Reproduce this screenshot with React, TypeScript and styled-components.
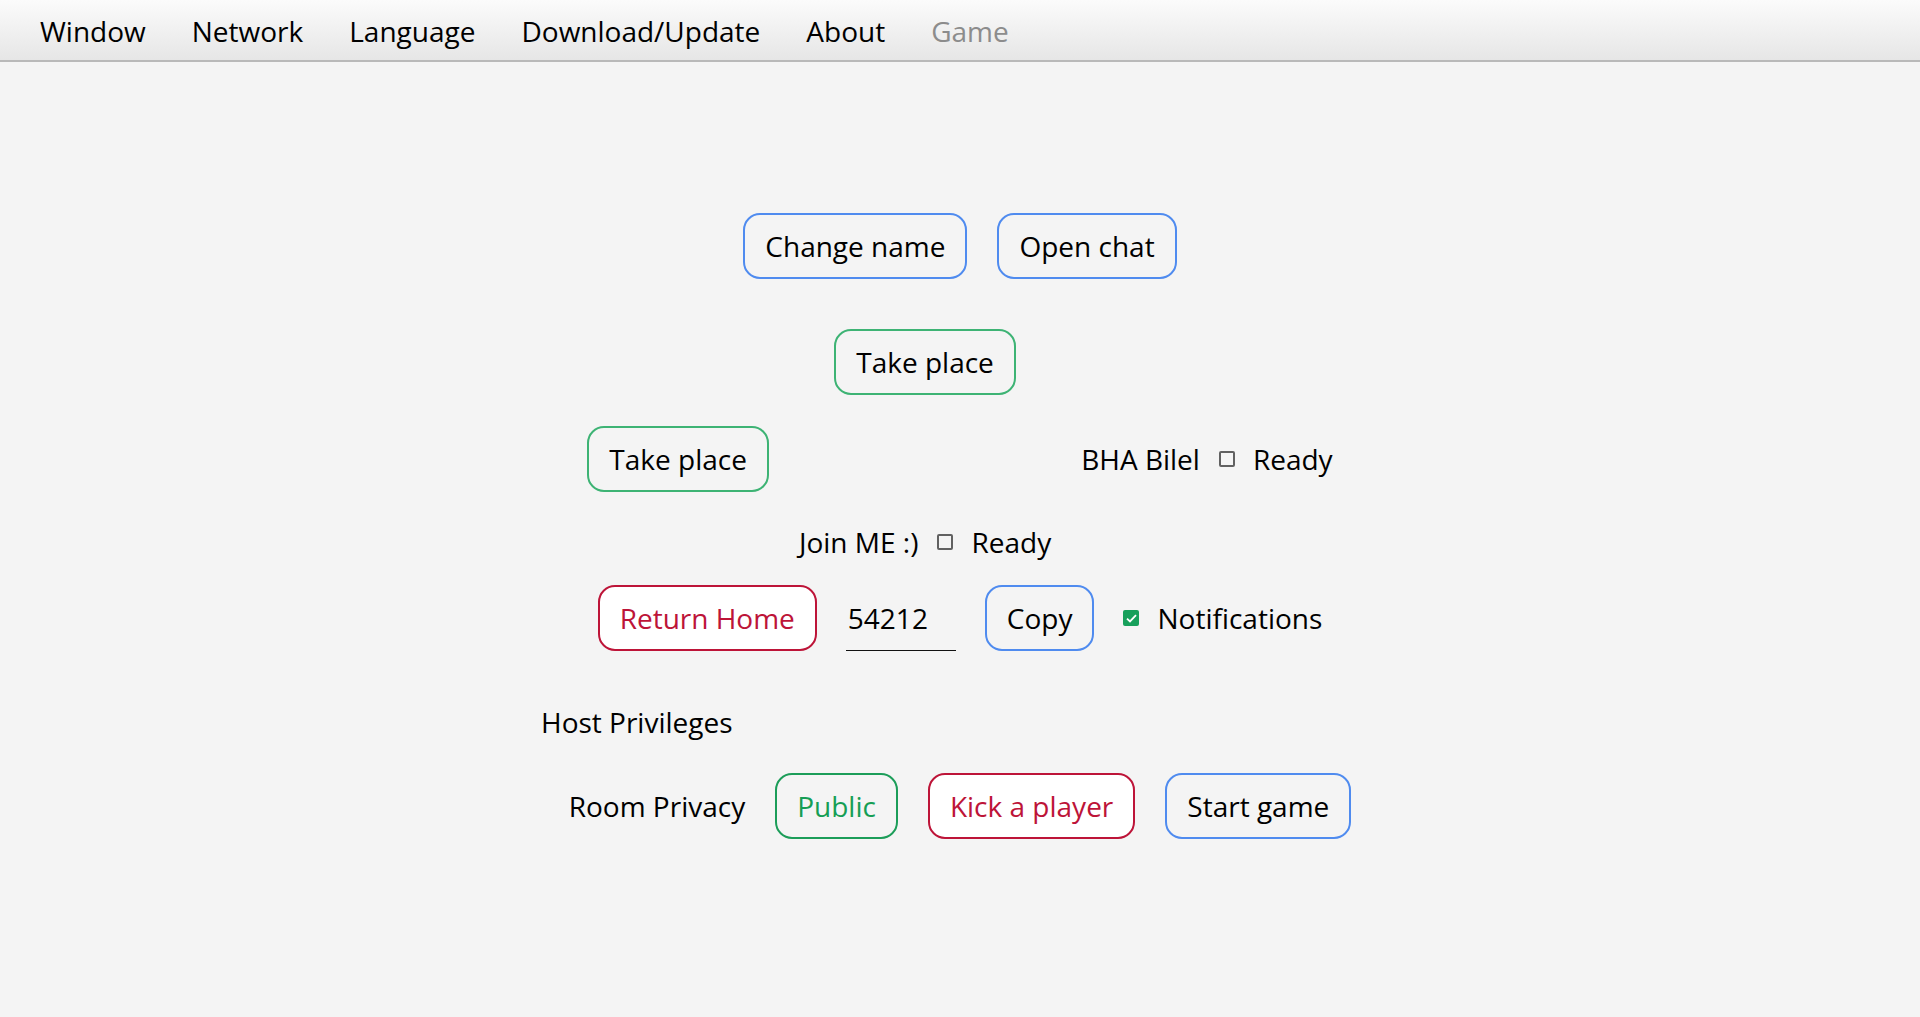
import * as React from "react";
import styled, { createGlobalStyle, css } from "styled-components";

const GlobalStyle = createGlobalStyle`
  html, body {
    margin: 0;
    padding: 0;
    background: #f4f4f4;
    font-family: "Open Sans", "Noto Sans", sans-serif;
    color: #000;
  }
  * { box-sizing: border-box; }
`;

const tones = {
  blue: { border: "#4f8bef", text: "#000", bg: "#f4f4f4" },
  green: { border: "#3db374", text: "#000", bg: "#f4f4f4" },
  public: { border: "#1c9d59", text: "#169e55", bg: "#f4f4f4" },
  red: { border: "#bd1438", text: "#bd1438", bg: "#ffffff" },
};

type Tone = keyof typeof tones;

const Page = styled.div`
  min-height: 1017px;
  display: flex;
  flex-direction: column;
`;

const MenuBar = styled.nav`
  height: 62px;
  display: flex;
  align-items: center;
  padding-left: 17px;
  background: linear-gradient(#fbfbfb, #e6e6e6);
  border-bottom: 2px solid #b9b9b9;
`;

const MenuItem = styled.span<{ $disabled?: boolean }>`
  font-size: 28px;
  line-height: 38px;
  padding: 1px 23px 0;
  color: ${({ $disabled }) => ($disabled ? "#8c8c8c" : "#000")};
`;

const Content = styled.main`
  display: flex;
  flex-direction: column;
  align-items: center;
  padding-top: 151px;
`;

const Row = styled.div<{ $gap?: number; $mt?: number }>`
  display: flex;
  align-items: center;
  gap: ${({ $gap }) => $gap ?? 30}px;
  margin-top: ${({ $mt }) => $mt ?? 0}px;
`;

const Button = styled.button<{ $tone: Tone }>`
  height: 66px;
  padding: 0 20px;
  font-family: inherit;
  font-size: 28px;
  line-height: 38px;
  border-radius: 17px;
  cursor: pointer;
  ${({ $tone }) => css`
    border: 2px solid ${tones[$tone].border};
    color: ${tones[$tone].text};
    background: ${tones[$tone].bg};
  `}
`;

const Table = styled.div`
  display: grid;
  grid-template-columns: auto auto auto;
  grid-template-rows: 66px 65px 40px;
  column-gap: 30px;
  row-gap: 31px;
  margin-top: 50px;
`;

const Cell = styled.div<{ $col: number; $row: number }>`
  grid-column: ${({ $col }) => $col};
  grid-row: ${({ $row }) => $row};
  display: flex;
  align-items: center;
  justify-content: center;
`;

const Label = styled.span`
  font-size: 28px;
  line-height: 38px;
  white-space: nowrap;
`;

const Seat = styled.div<{ $lead?: number }>`
  display: flex;
  align-items: center;
  gap: 18px;
  & > span:first-child + span {
    margin-left: ${({ $lead }) => $lead ?? 0}px;
  }
`;

const Box = styled.span<{ $checked?: boolean }>`
  width: 16px;
  height: 16px;
  border-radius: 2px;
  display: inline-flex;
  align-items: center;
  justify-content: center;
  ${({ $checked }) =>
    $checked
      ? css`
          background: #17a05b;
        `
      : css`
          border: 2px solid #616161;
        `}
`;

const CodeField = styled.input`
  width: 110px;
  height: 66px;
  padding: 0 0 0 2px;
  border: none;
  border-bottom: 1px solid #111;
  background: transparent;
  font-family: inherit;
  font-size: 28px;
  color: #000;
  outline: none;
`;

const HostSection = styled.section`
  width: 838px;
  margin-top: 52px;
  display: flex;
  flex-direction: column;
`;

const HostRow = styled(Row)`
  align-self: center;
`;

function CheckBox({ checked }: { checked?: boolean }) {
  return (
    <Box $checked={checked}>
      {checked && (
        <svg width="11" height="9" viewBox="0 0 11 9">
          <path d="M1 4.6 L4 7.4 L10 1.2" fill="none" stroke="#fff" strokeWidth="1.8" />
        </svg>
      )}
    </Box>
  );
}

function PlayerSeat({ name }: { name: string }) {
  return (
    <Seat $lead={1}>
      <Label>{name}</Label>
      <CheckBox />
      <Label>Ready</Label>
    </Seat>
  );
}

export default function App() {
  const menu = ["Window", "Network", "Language", "Download/Update", "About"];
  return (
    <>
      <GlobalStyle />
      <Page>
        <MenuBar>
          {menu.map((m) => (
            <MenuItem key={m}>{m}</MenuItem>
          ))}
          <MenuItem $disabled>Game</MenuItem>
        </MenuBar>

        <Content>
          <Row $gap={30}>
            <Button $tone="blue">Change name</Button>
            <Button $tone="blue">Open chat</Button>
          </Row>

          <Table>
            <Cell $col={2} $row={1}>
              <Button $tone="green">Take place</Button>
            </Cell>
            <Cell $col={1} $row={2}>
              <Button $tone="green">Take place</Button>
            </Cell>
            <Cell $col={3} $row={2}>
              <PlayerSeat name="BHA Bilel" />
            </Cell>
            <Cell $col={2} $row={3}>
              <PlayerSeat name="Join ME :)" />
            </Cell>
          </Table>

          <Row $gap={29} $mt={23}>
            <Button $tone="red">Return Home</Button>
            <CodeField defaultValue="54212" />
            <Button $tone="blue">Copy</Button>
            <Seat>
              <CheckBox checked />
              <Label>Notifications</Label>
            </Seat>
          </Row>

          <HostSection>
            <Label>Host Privileges</Label>
            <HostRow $gap={30} $mt={32}>
              <Label>Room Privacy</Label>
              <Button $tone="public">Public</Button>
              <Button $tone="red">Kick a player</Button>
              <Button $tone="blue">Start game</Button>
            </HostRow>
          </HostSection>
        </Content>
      </Page>
    </>
  );
}
